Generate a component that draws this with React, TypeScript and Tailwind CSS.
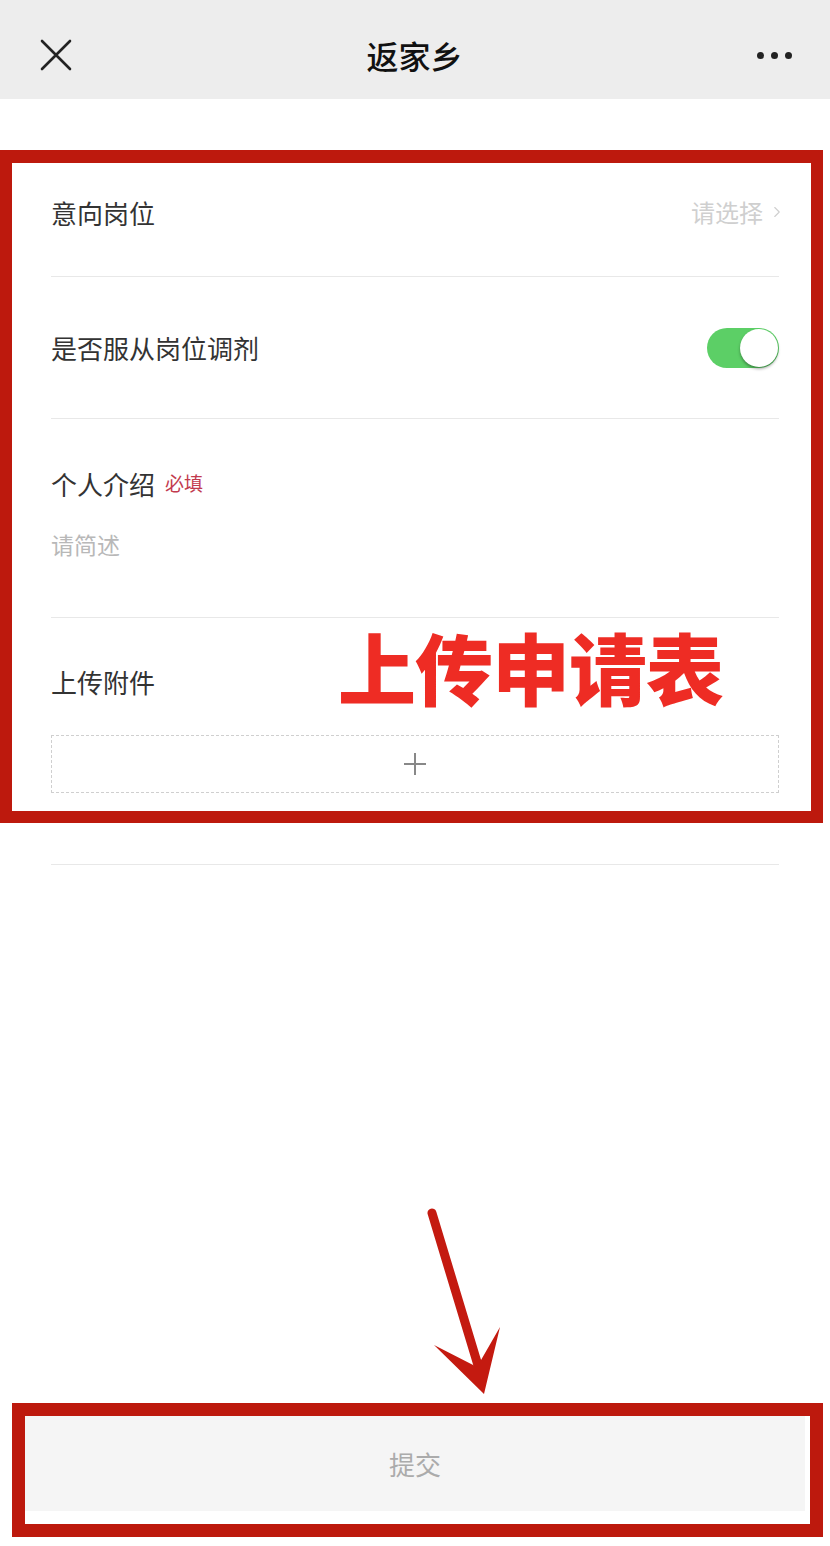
import { ChevronRight } from "lucide-react";

const font = { fontFamily: '"Noto Sans CJK SC", "Noto Sans", sans-serif' };

const Header = () => (
  <div className="h-[99px] pt-[11px] bg-[#ededed] flex items-center justify-between pl-[40px] pr-[38px] shrink-0">
    <svg width="32" height="32" viewBox="0 0 32 32">
      <path d="M2 2 L30 30 M30 2 L2 30" stroke="#222" strokeWidth="2.6" strokeLinecap="round" />
    </svg>
    <div className="text-[32px] text-[#111] font-medium">返家乡</div>
    <div className="flex gap-[7px]">
      <span className="w-[7px] h-[7px] rounded-full bg-[#222]" />
      <span className="w-[7px] h-[7px] rounded-full bg-[#222]" />
      <span className="w-[7px] h-[7px] rounded-full bg-[#222]" />
    </div>
  </div>
);

const Toggle = () => (
  <div className="w-[72px] h-[40px] rounded-full bg-[#5ccf66] relative">
    <div className="absolute right-[1px] top-[1px] w-[38px] h-[38px] rounded-full bg-white shadow-[0_2px_3px_rgba(0,0,0,0.35)]" />
  </div>
);

export default function App() {
  return (
    <div style={font} className="relative w-[830px] h-[1546px] bg-white flex flex-col overflow-hidden">
      <Header />

      <div className="px-[51px] pt-[49px]">
        <div className="h-[129px] flex items-center justify-between border-b border-[#e8e8e8]">
          <span className="text-[26px] text-[#333]">意向岗位</span>
          <span className="flex items-center text-[24px] text-[#cfcfcf] -mr-[7px]">
            请选择
            <ChevronRight className="w-[18px] h-[18px] ml-[5px]" strokeWidth={1.5} />
          </span>
        </div>

        <div className="h-[142px] flex items-center justify-between border-b border-[#e8e8e8]">
          <span className="text-[26px] text-[#333]">是否服从岗位调剂</span>
          <Toggle />
        </div>

        <div className="h-[199px] pt-[46px] flex flex-col border-b border-[#e8e8e8]">
          <div className="flex items-center h-[36px]">
            <span className="text-[26px] text-[#333]">个人介绍</span>
            <span className="text-[19px] text-[#c23a4e] ml-[10px]">必填</span>
          </div>
          <div className="mt-[27px] text-[23px] leading-[33px] text-[#b8b8b8]">请简述</div>
        </div>

        <div className="pt-[45px] pb-[71px] border-b border-[#e8e8e8]">
          <div className="h-[36px] flex items-center text-[26px] text-[#333]">上传附件</div>
          <div className="mt-[36px] h-[58px] border border-dashed border-[#cfcfcf] flex items-center justify-center">
            <svg width="24" height="24" viewBox="0 0 24 24">
              <path d="M12 1 V23 M1 12 H23" stroke="#888" strokeWidth="2" />
            </svg>
          </div>
        </div>
      </div>

      <div className="mt-auto px-[25px] pb-[35px]">
        <div className="h-[95px] bg-[#f5f5f5] flex items-center justify-center text-[26px] text-[#ababab]">
          提交
        </div>
      </div>

      {/* annotations */}
      <div className="absolute left-0 top-[150px] w-[823px] h-[673px] border-[12px] border-t-[13px] border-[#bd190d]" />
      <div className="absolute left-[12px] top-[1403px] w-[811px] h-[134px] border-[13px] border-[#bd190d]" />
      <div className="absolute left-[338px] top-[627px] text-[78px] leading-none font-black text-[#ee2c24] tracking-[-1px]">
        上传申请表
      </div>
      <svg className="absolute left-0 top-0 pointer-events-none" width="830" height="1546">
        <line x1="432" y1="1213" x2="480" y2="1372" stroke="#c41a10" strokeWidth="9" strokeLinecap="round" />
        <polygon points="434,1345 477,1367 500,1327 484,1394" fill="#c41a10" />
      </svg>
    </div>
  );
}
